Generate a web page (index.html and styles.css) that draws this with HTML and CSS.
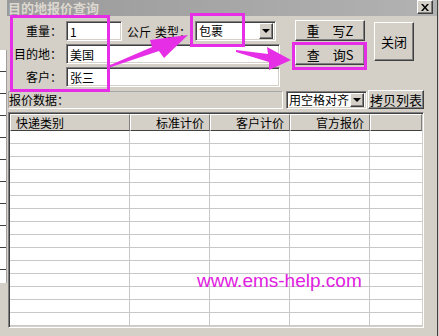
FILE: index.html
```html
<!DOCTYPE html>
<html lang="zh-CN">
<head>
    <meta charset="UTF-8">
    <meta name="viewport" content="width=device-width, initial-scale=1.0">
    <title>目的地报价查询</title>
    <link rel="stylesheet" href="styles.css">
</head>
<body>
    <!-- strip of the window behind the dialog -->
    <div class="side">
        <div class="side-top"></div>
        <div class="side-list"></div>
        <div class="side-bottom"></div>
    </div>

    <div class="dialog">
        <div class="titlebar">
            <span class="title">目的地报价查询</span>
            <span class="close-x">
                <svg width="8" height="7" viewBox="0 0 8 7"><path d="M0 0h2l2 2.5L6 0h2L5 3.5 8 7H6L4 4.5 2 7H0l3-3.5z" fill="#000"/></svg>
            </span>
        </div>

        <div class="top">
            <div class="fields">
                <div class="row">
                    <label class="lbl" for="weight">重量：</label>
                    <input class="input short" id="weight" type="text" value="1">
                    <span class="unit">公斤</span>
                    <span class="type-lbl">类型：</span>
                    <div class="select type-sel">
                        <span class="sel-text">包裹</span>
                        <span class="drop"><span class="arrow"></span></span>
                    </div>
                </div>
                <div class="row">
                    <label class="lbl" for="dest">目的地：</label>
                    <input class="input long" id="dest" type="text" value="美国">
                </div>
                <div class="row">
                    <label class="lbl" for="client">客户：</label>
                    <input class="input long" id="client" type="text" value="张三">
                </div>
            </div>
            <div class="btns">
                <button class="btn act">重　写Z</button>
                <button class="btn act">查　询S</button>
            </div>
            <button class="btn close-btn">关闭</button>
        </div>

        <div class="middle">
            <div class="panel">报价数据：</div>
            <div class="select align-sel">
                <span class="sel-text">用空格对齐</span>
                <span class="drop"><span class="arrow"></span></span>
            </div>
            <button class="btn copy-btn">拷贝列表</button>
        </div>

        <div class="grid">
            <div class="ghead">
                <div class="hcell c0 left">快递类别</div>
                <div class="hcell c1">标准计价</div>
                <div class="hcell c2">客户计价</div>
                <div class="hcell c3">官方报价</div>
                <div class="hcell c4"></div>
            </div>
            <div id="rows"></div>
        </div>
    </div>
    <div class="edge"></div>

    <!-- annotations drawn over the screenshot -->
    <svg class="marks" width="439" height="336" viewBox="0 0 439 336">
        <g fill="none" stroke="#e62ee6" stroke-width="3">
            <rect x="11.5" y="16.5" width="97" height="74"/>
            <rect x="191.5" y="14.5" width="52" height="31"/>
            <rect x="293.5" y="43.5" width="72" height="25"/>
        </g>
        <g fill="#e62ee6">
            <polygon points="108,66 152,47 150,40 188,35 164,58 159,51 108,68"/>
            <polygon points="236,50 268,54 267,47 291,60 269,70 269,62 236,52"/>
        </g>
    </svg>
    <div class="watermark">www.ems-help.com</div>

    <script>
        // empty result rows of the list
        var rows = document.getElementById("rows");
        for (var i = 0; i < 15; i++) {
            var row = document.createElement("div");
            row.className = "grow";
            for (var j = 0; j < 5; j++) {
                var cell = document.createElement("div");
                cell.className = "gcell c" + j;
                row.appendChild(cell);
            }
            rows.appendChild(row);
        }
    </script>
</body>
</html>
```

FILE: styles.css
```css
* {
    margin: 0;
    padding: 0;
    box-sizing: border-box;
}

body {
    width: 439px;
    height: 336px;
    overflow: hidden;
    display: flex;
    position: relative;
    background-color: #d4d0c8;
    font-family: "Noto Sans CJK SC", "Liberation Sans", sans-serif;
    font-size: 12px;
    color: #000;
}

/* background window */
.side {
    width: 7px;
    display: flex;
    flex-direction: column;
}

.side-top {
    height: 50px;
    background-color: #d4d0c8;
}

.side-list {
    flex: 1;
    background: repeating-linear-gradient(to bottom, #fff 0 21px, #404040 21px 22px);
    border-right: 1px solid #a0a0a0;
}

.side-bottom {
    height: 53px;
    background-color: #d4d0c8;
}

.edge {
    width: 1px;
    background-color: #d4d0c8;
}

.dialog {
    width: 431px;
    border-right: 1px solid #404040;
    display: flex;
    flex-direction: column;
}

.titlebar {
    height: 16px;
    display: flex;
    justify-content: space-between;
    align-items: flex-start;
    background: linear-gradient(to right, #9a9a9a, #b2b2b2);
}

.title {
    padding-left: 1px;
    font-size: 13px;
    font-weight: bold;
    line-height: 16px;
    color: #dcd8d0;
}

.close-x {
    width: 16px;
    height: 14px;
    margin-right: 4px;
    display: flex;
    align-items: center;
    justify-content: center;
    background-color: #d4d0c8;
    border: 1px solid;
    border-color: #fff #404040 #404040 #fff;
    box-shadow: inset -1px -1px #808080;
}

/* form */
.top {
    display: flex;
    align-items: flex-start;
    height: 74px;
}

.fields {
    width: 273px;
    padding-top: 5px;
    display: flex;
    flex-direction: column;
    gap: 3px;
}

.row {
    height: 20px;
    display: flex;
    align-items: center;
}

.lbl {
    width: 55px;
    margin-right: 4px;
    text-align: right;
    line-height: 20px;
}

.input {
    height: 20px;
    padding: 0 3px;
    font-family: "Noto Sans CJK SC", "Liberation Sans", sans-serif;
    font-size: 12px;
    color: #000;
    background-color: #fff;
    border: 1px solid;
    border-color: #808080 #fff #fff #808080;
    box-shadow: inset 1px 1px #404040, inset -1px -1px #d4d0c8;
    outline: none;
}

.short {
    width: 56px;
}

.long {
    width: 214px;
}

.unit {
    margin-left: 5px;
}

.type-lbl {
    margin-left: 4px;
}

.select {
    height: 20px;
    display: flex;
    align-items: center;
    justify-content: space-between;
    background-color: #fff;
    border: 1px solid;
    border-color: #808080 #fff #fff #808080;
    box-shadow: inset 1px 1px #404040, inset -1px -1px #d4d0c8;
    padding: 2px;
}

.sel-text {
    padding-left: 1px;
    line-height: 16px;
    white-space: nowrap;
}

.type-sel {
    width: 81px;
    margin-left: 4px;
}

.drop {
    flex-shrink: 0;
    width: 14px;
    height: 16px;
    display: flex;
    align-items: center;
    justify-content: center;
    background-color: #d4d0c8;
    border: 1px solid;
    border-color: #fff #404040 #404040 #fff;
    box-shadow: inset -1px -1px #808080;
}

.arrow {
    width: 0;
    height: 0;
    border-left: 4px solid transparent;
    border-right: 4px solid transparent;
    border-top: 4px solid #000;
}

.btn {
    font-family: "Noto Sans CJK SC", "Liberation Sans", sans-serif;
    font-size: 13px;
    color: #000;
    background-color: #d4d0c8;
    border: 1px solid;
    border-color: #fff #404040 #404040 #fff;
    box-shadow: inset -1px -1px #808080;
    line-height: 1;
    white-space: nowrap;
}

.btns {
    margin-left: 15px;
    padding-top: 4px;
    display: flex;
    flex-direction: column;
    gap: 3px;
}

.act {
    width: 70px;
    height: 21px;
}

.close-btn {
    width: 40px;
    height: 39px;
    margin-left: 9px;
    margin-top: 6px;
}

/* list toolbar */
.middle {
    height: 19px;
    display: flex;
    align-items: stretch;
}

.panel {
    width: 275px;
    margin: 1px 0 0 1px;
    line-height: 15px;
    border: 1px solid;
    border-color: #a8a8a8 #fff #fff #a8a8a8;
}

.align-sel {
    width: 81px;
    height: 18px;
    margin: 1px 0 0 3px;
    padding: 1px 2px 1px 1px;
}

.align-sel .drop {
    height: 14px;
}

.copy-btn {
    width: 56px;
    margin-left: 1px;
    padding: 0;
}

/* result list */
.grid {
    width: 416px;
    height: 216px;
    margin: 3px 0 0 1px;
    overflow: hidden;
    background-color: #fff;
    border: 1px solid;
    border-color: #808080 #fff #fff #808080;
    box-shadow: inset 1px 1px #404040, inset -1px -1px #d4d0c8;
    padding: 1px;
}

.ghead {
    height: 17px;
    display: flex;
}

.hcell {
    height: 17px;
    line-height: 15px;
    padding: 0 5px;
    text-align: right;
    background-color: #d4d0c8;
    border: 1px solid;
    border-color: #fff #808080 #404040 #fff;
}

.hcell.left {
    text-align: left;
}

.c0 {
    width: 120px;
}

.c1,
.c2,
.c3 {
    width: 80px;
}

.c4 {
    flex: 1;
}

.grow {
    height: 13px;
    display: flex;
}

.gcell {
    border-right: 1px solid #c8c8c8;
    border-bottom: 1px solid #c8c8c8;
}

.gcell.c4 {
    border-right: none;
}

.marks {
    position: absolute;
    left: 0;
    top: 0;
    pointer-events: none;
}

.watermark {
    position: absolute;
    left: 197px;
    top: 271px;
    font-family: "Liberation Sans", sans-serif;
    font-size: 19px;
    line-height: 19px;
    color: #e020e0;
}
```
